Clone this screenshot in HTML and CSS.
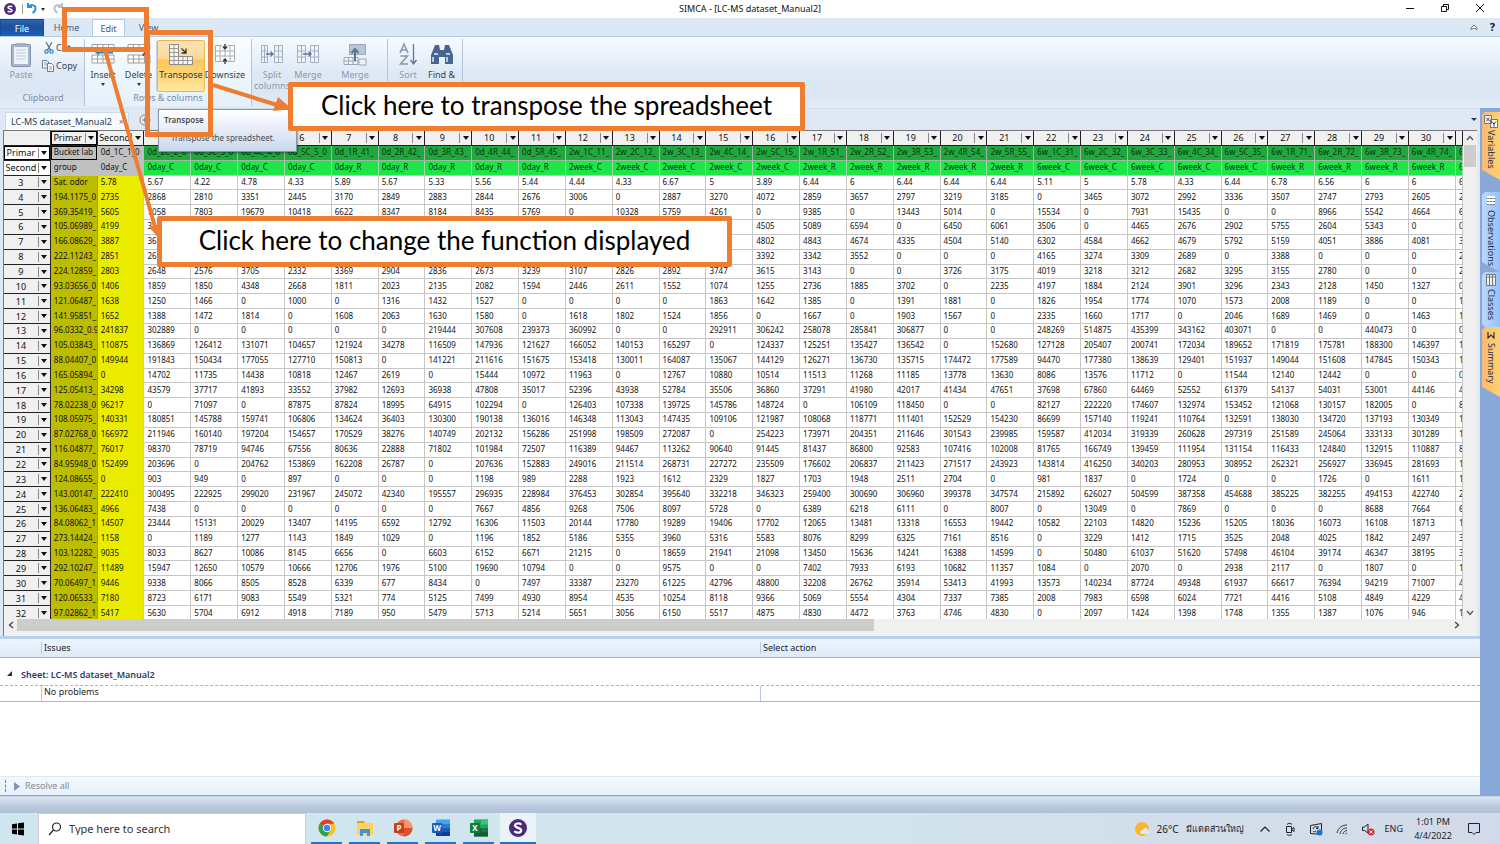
FILE: index.html
```html
<!DOCTYPE html>
<html lang="en">
<head>
<meta charset="utf-8">
<title>SIMCA - [LC-MS dataset_Manual2]</title>
<link rel="stylesheet" href="styles.css">
</head>
<body>
<div class="app">
  <header class="titlebar">
    <div class="quick">
      <svg width="12" height="12" viewBox="0 0 12 12"><circle cx="6" cy="6" r="6" fill="#4b2a7b"/><path d="M8.2 3.9C7.6 3 4 2.7 4 4.5S8.1 5.800 8.100 7.500 4.500 9.100 3.700 8" fill="none" stroke="#fff" stroke-width="1.500"/></svg>
      <span class="quick-sep"></span>
      <button class="plain" aria-label="Undo"><svg width="12" height="12" viewBox="0 0 12 12"><path d="M2 0v4h4M2.500 3.500C6 .500 10 2.500 9.500 6 9.200 8 8 9 6.500 10" fill="none" stroke="#2e8fd6" stroke-width="2"/></svg></button>
      <span class="caret"></span>
      <button class="plain redo" aria-label="Redo"><svg width="12" height="12" viewBox="0 0 12 12"><path d="M10 0v4H6M9.500 3.500C6 .500 2 2.500 2.500 6 2.800 8 4 9 5.500 10" fill="none" stroke="#b4c0d0" stroke-width="2"/></svg></button>
      <span class="caret dim"></span>
      <span class="bar"></span>
    </div>
    <h1 class="title">SIMCA - [LC-MS dataset_Manual2]</h1>
    <div class="window-buttons">
      <button class="plain" aria-label="Minimize"><svg width="10" height="10" viewBox="0 0 10 10"><path d="M1 4.500h8" stroke="#111"/></svg></button>
      <button class="plain" aria-label="Restore"><svg width="10" height="10" viewBox="0 0 10 10"><path d="M1.500 2.500h5v5h-5zM3.500 2V.500h5v5H7" fill="none" stroke="#111"/></svg></button>
      <button class="plain" aria-label="Close"><svg width="10" height="10" viewBox="0 0 10 10"><path d="M1 0l8 8M9 0L1 8" stroke="#111"/></svg></button>
    </div>
  </header>

  <nav class="tabs">
    <button class="tab file">File</button>
    <button class="tab home">Home</button>
    <button class="tab edit">Edit</button>
    <button class="tab view">View</button>
    <span class="tabs-end">
      <svg width="8" height="7" viewBox="0 0 8 7"><path d="M1 5.500V4l3-3 3 3v1.500L4 4z" fill="#fff" stroke="#555" stroke-width=".8"/></svg>
      <b class="help">?</b>
    </span>
  </nav>

  <section class="ribbon">
    <div class="group clip">
      <div class="tools">
        <button class="tool off w-paste"><svg width="22" height="26" viewBox="0 0 22 26"><rect x="1.500" y="3.500" width="19" height="22" rx="1" fill="#a9b6c9" stroke="#8394ac"/><rect x="4" y="6" width="14" height="17" fill="#eef3fa"/><path d="M6 9h10M6 12h10M6 15h10M6 18h10" stroke="#c2cddd"/><rect x="6" y="2" width="10" height="4" rx="1" fill="#a3b1c6"/></svg>Paste</button>
        <div class="stack">
          <button class="mini cut"><svg width="10" height="12" viewBox="0 0 10 12"><path d="M2 0l4.500 8M8 0L3.500 8" stroke="#5f7387" stroke-width="1.300"/><circle cx="2.500" cy="9.500" r="1.700" fill="none" stroke="#2e86cc" stroke-width="1.200"/><circle cx="7.500" cy="9.500" r="1.700" fill="none" stroke="#2e86cc" stroke-width="1.200"/></svg>Cut</button>
          <button class="mini"><svg width="12" height="12" viewBox="0 0 12 12"><path d="M.5.5h4.500l1.500 1.500v6h-6z" fill="#fff" stroke="#6d7c93"/><path d="M2 3h3M2 5h3" stroke="#6d9bc9"/><path d="M5.500 3.500h4l2 2v6h-6z" fill="#fff" stroke="#6d7c93"/><path d="M7 7h3M7 9h3" stroke="#6d9bc9"/></svg>Copy</button>
        </div>
      </div>
      <div class="caption">Clipboard</div>
    </div>
    <div class="group rows">
      <div class="tools">
        <button class="tool w-ins"><svg width="24" height="26" viewBox="0 0 24 26"><path d="M1 3.500h22v5H1zM1 14h22v8H1zM1 18h22M6.500 3v5M12 3v5M17.500 3v5M6.500 14v8M12 14v8M17.500 14v8" fill="#fff" stroke="#a0a0a0"/><path d="M3 10.500l5-3v2h14v3H8v2z" fill="#2f7fc2"/></svg>Insert<span class="caret"></span></button>
        <button class="tool w-del"><svg width="24" height="26" viewBox="0 0 24 26"><path d="M1 3.500h22v5H1zM1 14h22v8H1zM1 18h22M6.500 3v5M12 3v5M17.500 3v5M6.500 14v8M12 14v8M17.500 14v8" fill="#fff" stroke="#a0a0a0"/><path d="M16 15c1-3 3-5 7-6" fill="none" stroke="#d62b1f" stroke-width="2"/></svg>Delete<span class="caret"></span></button>
        <button class="tool w-tra hot"><svg width="26" height="26" viewBox="0 0 26 26"><path d="M1.500 3.500h9v12h14v8h-23z" fill="#f6f4f0" stroke="#8a8a8a"/><path d="M1.500 7.500h9M1.500 11.500h9M1.500 15.500h9M1.500 19.500h23M6 3.500v20M10.500 15v8M15 15.500v8M19.500 15.500v8" stroke="#999"/><path d="M13.500 7.500l4 4M18 7.500v4.500h-4.500" fill="none" stroke="#333" stroke-width="1.300"/></svg>Transpose</button>
        <button class="tool w-dow"><svg width="22" height="26" viewBox="0 0 22 26"><path d="M1.500 4.500h19v16h-19zM1 10h20M1 15h20M6 4v16M11 4v16M16 4v16" fill="#fff" stroke="#aaa"/><path d="M8 3h6v6H8zM8 16h6v6H8z" fill="#eef4fb"/><path d="M11 3v5M9 5.500L11 8l2-2.500M11 23v-5M9 20.500l2-2.500 2 2.500" fill="none" stroke="#333" stroke-width="1.300"/></svg>Downsize</button>
      </div>
      <div class="caption">Rows &amp; columns</div>
    </div>
    <div class="group merge">
      <div class="tools">
        <button class="tool off w-spl"><svg width="22" height="26" viewBox="0 0 22 26"><path d="M.5 4.500h6v17h-6zM.5 10h6M.5 16h6M3.500 4v17M13.500 4.500h8v17h-8zM13.500 10h8M13.500 16h8M17.500 4v17" fill="#eef3fa" stroke="#a3afc2"/><path d="M5 13h7M9.500 10.500L12 13l-2.500 2.500" fill="none" stroke="#5f7596" stroke-width="1.300"/></svg>Split<br>columns</button>
        <button class="tool off w-mer"><svg width="22" height="26" viewBox="0 0 22 26"><path d="M.5 4.500h8v17h-8zM.5 10h8M.5 16h8M4.500 4v17M13.500 4.500h8v17h-8zM13.500 10h8M13.500 16h8M17.500 4v17" fill="#eef3fa" stroke="#a3afc2"/><path d="M6 13h8M11.500 10.500L14 13l-2.500 2.500" fill="none" stroke="#5f7596" stroke-width="1.300"/></svg>Merge</button>
        <button class="tool off w-mrg"><svg width="24" height="26" viewBox="0 0 24 26"><path d="M6.500 3.500h16v10h-16z" fill="#b9c4d4" stroke="#9aa8bc"/><path d="M1 16.500h14v7H1zM1 20h14M5.500 16v8M10 16v8M16 18h7v6h-7z" fill="#eef3fa" stroke="#9aa8bc"/><path d="M12 20V9M8.500 12L12 8l3.500 4" fill="none" stroke="#5f7596" stroke-width="2"/></svg>Merge</button>
      </div>
    </div>
    <div class="group find">
      <div class="tools">
        <button class="tool off w-sor"><svg width="20" height="26" viewBox="0 0 20 26"><path d="M2 12l4-9 4 9M3.500 9h5M2.500 15h7l-7 8h7.500" fill="none" stroke="#8695ae" stroke-width="1.500"/><path d="M15.500 3v19M12.500 19l3 4 3-4" fill="none" stroke="#62779a" stroke-width="1.300"/></svg>Sort</button>
        <button class="tool w-fin"><svg width="24" height="26" viewBox="0 0 24 26"><path d="M5 4h4l1 5h4l1-5h4l4 10v9h-8v-7h-6v7H1v-9z" fill="#49658d"/><path d="M4 13h4M16 13h4M3 16v5M17 16v5" stroke="#b5cbe6" stroke-width="2"/></svg>Find &amp;</button>
      </div>
    </div>
  </section>

  <main class="workspace">
    <div class="content">
      <div class="docbar">
        <div class="doctab"><span>LC-MS dataset_Manual2</span><span class="x">×</span></div>
        <svg class="plus" width="12" height="12" viewBox="0 0 12 12"><circle cx="6" cy="6" r="5" fill="#f4f7fb" stroke="#777"/><path d="M3 6h6M6 3v6" stroke="#666"/></svg>
        <span class="caret doc-caret"></span>
      </div>
      <div class="sheet">
        <div class="sheet-row">
          <div class="cells"><table class="grid" id="grid"></table></div>
          <div class="vscroll">
            <svg width="8" height="6" viewBox="0 0 8 6"><path d="M1 5l3-3.500L7 5" fill="none" stroke="#555" stroke-width="1.300"/></svg>
            <span class="vthumb"></span>
            <svg width="8" height="6" viewBox="0 0 8 6"><path d="M1 1l3 3.500L7 1" fill="none" stroke="#555" stroke-width="1.300"/></svg>
          </div>
        </div>
        <div class="hscroll">
          <svg width="6" height="8" viewBox="0 0 6 8"><path d="M5 1L1.500 4 5 7" fill="none" stroke="#444" stroke-width="1.300"/></svg>
          <span class="htrack"><span class="hthumb"></span></span>
          <svg width="6" height="8" viewBox="0 0 6 8"><path d="M1 1l3.500 3L1 7" fill="none" stroke="#444" stroke-width="1.300"/></svg>
        </div>
      </div>
      <section class="issues">
        <div class="issue-head"><span class="c1"></span><span class="c2">Issues</span><span class="c3">Select action</span></div>
        <div class="issue-sheet"><svg width="6" height="6" viewBox="0 0 6 6"><path d="M5 0v5H0z" fill="#333"/></svg><b>Sheet: LC-MS dataset_Manual2</b></div>
        <div class="issue-row"><span class="c1"></span><span class="c2">No problems</span><span class="c3"></span></div>
        <div class="issue-space"></div>
        <div class="resolve"><span class="grip"></span><button class="plain resolve-btn"><svg width="6" height="9" viewBox="0 0 6 9"><path d="M0 0l6 4.500L0 9z" fill="#7f93b5"/></svg>Resolve all</button></div>
      </section>
    </div>
    <aside class="side">
      <button class="side-tab orange t-var"><svg width="14" height="14" viewBox="0 0 14 14"><path d="M.5.500h7v8h-7zM6.500 4.500h7v8h-7z" fill="#fff" stroke="#777"/><path d="M2 2.500l4 4M6 2.500l-4 4M8 6.500l2 2.500 2-2.500M10 9v2.500" stroke="#333" fill="none"/></svg>Variables</button>
      <button class="side-tab blue t-obs"><svg width="10" height="10" viewBox="0 0 10 10"><path d="M1 1h8M1 4h8M1 7h8" stroke="#fff" stroke-width="2"/><path d="M1 2.500h8M1 5.500h8M1 8.500h8" stroke="#777" stroke-dasharray="2 1"/></svg>Observations</button>
      <button class="side-tab blue t-cls"><svg width="10" height="12" viewBox="0 0 10 12"><path d="M.5.500h9v11h-9zM3.500 0v12M6.500 0v12M0 3h10" fill="#eee" stroke="#777"/></svg>Classes</button>
      <button class="side-tab orange t-sum"><svg width="8" height="8" viewBox="0 0 8 8"><path d="M1 1v6l3-3 3 3V1" fill="none" stroke="#333" stroke-width="1.200"/></svg>Summary</button>
    </aside>
  </main>
  <div class="status"></div>

  <footer class="taskbar">
    <button class="plain start" aria-label="Start"><svg width="14" height="14" viewBox="0 0 14 14"><path d="M1 2.300l5-.8v5H1zM7 1.300L13 .5v6H7zM1 7.500h5v5l-5-.8zM7 7.500h6v6l-6-.8z" fill="#000"/></svg></button>
    <label class="search"><svg width="14" height="14" viewBox="0 0 14 14"><circle cx="8.500" cy="5" r="4" fill="none" stroke="#222" stroke-width="1.200"/><path d="M5.500 8L1 13" stroke="#222" stroke-width="1.200"/></svg><input type="text" placeholder="Type here to search" aria-label="Search"></label>
    <div class="apps">
      <button class="app-btn" aria-label="Chrome"><svg width="18" height="18" viewBox="0 0 18 18"><circle cx="9" cy="9" r="8.500" fill="#fbc116"/><path d="M9 9L1.640 4.750A8.500 8.500 0 0 1 16.360 4.750H9z" fill="#e33b2e"/><path d="M9 9L1.640 4.750A8.500 8.500 0 0 0 8.700 17.500l4-6.500z" fill="#2aa14a"/><circle cx="9" cy="9" r="4.200" fill="#fff"/><circle cx="9" cy="9" r="3.300" fill="#4285f4"/></svg></button>
      <button class="app-btn" aria-label="File Explorer"><svg width="18" height="18" viewBox="0 0 18 18"><path d="M1 2h7l1 2h7v4H1z" fill="#e0a112"/><path d="M1 4h16v12H1z" fill="#fdd263"/><path d="M4 10h10v7h-3v-3H7v3H4z" fill="#3d97d8"/></svg></button>
      <button class="app-btn" aria-label="PowerPoint"><svg width="20" height="18" viewBox="0 0 20 18"><circle cx="11" cy="9" r="8.500" fill="#ed6c47"/><path d="M11 9h8.500a8.500 8.500 0 0 1-8.500 8.500z" fill="#d35230"/><path d="M11 .5A8.500 8.500 0 0 1 19.500 9H11z" fill="#ff8f6b"/><rect x="1" y="4" width="10" height="10" rx="1" fill="#c43e1c"/><text x="6" y="12" class="glyph">P</text></svg></button>
      <button class="app-btn" aria-label="Word"><svg width="20" height="18" viewBox="0 0 20 18"><path d="M5 .500h14v5H5z" fill="#41a5ee"/><path d="M5 5h14v4H5z" fill="#2b7cd3"/><path d="M5 9h14v4H5z" fill="#185abd"/><path d="M5 13h14v4H5z" fill="#103f91"/><rect x="1" y="4" width="10" height="10" rx="1" fill="#185abd"/><text x="6" y="12" class="glyph">W</text></svg></button>
      <button class="app-btn" aria-label="Excel"><svg width="20" height="18" viewBox="0 0 20 18"><path d="M5 .500h14v17H5z" fill="#21a366"/><path d="M12 .500h7v5h-7z" fill="#33c481"/><path d="M5 9h14v8.500H5z" fill="#185c37"/><path d="M12 9h7v4h-7z" fill="#107c41"/><rect x="1" y="4" width="10" height="10" rx="1" fill="#107c41"/><text x="6" y="12" class="glyph">X</text></svg></button>
      <button class="app-btn on" aria-label="SIMCA"><svg width="18" height="20" viewBox="0 0 18 20"><circle cx="9" cy="10" r="9" fill="#4b2a7b"/><path d="M12.300 6.800C11.200 4.800 6 5 6 7.600S12.200 9.600 12.200 12.400 6.600 15.200 5.500 13" fill="none" stroke="#fff" stroke-width="2.200"/></svg></button>
    </div>
    <div class="tray">
      <svg width="16" height="16" viewBox="0 0 16 16"><circle cx="8" cy="8" r="7" fill="#fbb62c"/><path d="M7 13c-2-3 1-4 2-4 1-3 5-2 5 0 3 1 1 4-1 4z" fill="#d8edfb"/></svg>
      <span class="temp">26°C</span><span class="thai">มีแดดส่วนใหญ่</span>
      <svg class="t-up" width="12" height="12" viewBox="0 0 12 12"><path d="M1.500 8.500L6 4l4.500 4.500" fill="none" stroke="#222" stroke-width="1.200"/></svg>
      <svg class="t-ic" width="12" height="14" viewBox="0 0 12 14"><path d="M2.500 4.500h5v6h-5zM8 7l2-1.500v4L8 8M3 2.500c1-1.500 4-1.500 5 0M3 12.500c1 1 4 1 5 0" fill="none" stroke="#222"/></svg>
      <svg class="t-ic" width="14" height="14" viewBox="0 0 14 14"><path d="M1.500 3.500l11-2v11l-11-1z" fill="none" stroke="#222"/><path d="M4 7c1-3 4-3 5-1M9 4v2.500H7M4 9c1 1 2 1 3 0" fill="none" stroke="#222"/><circle cx="10.500" cy="10.500" r="3" fill="#2472c8"/></svg>
      <svg class="t-ic" width="12" height="14" viewBox="0 0 12 14"><path d="M1 11C2 6 6 3 11 3M4 12c1-4 3-6 7-6M7 12c.5-2 2-3.500 4-3.500M9.500 12l1.500-1" fill="none" stroke="#333"/></svg>
      <svg class="t-ic" width="14" height="14" viewBox="0 0 14 14"><path d="M1.500 5h2L7 2v9L3.500 8.500h-2z" fill="none" stroke="#222"/><circle cx="10" cy="10" r="3.500" fill="#d92b2b"/><path d="M8.500 8.500l3 3M11.500 8.500l-3 3" stroke="#fff"/></svg>
      <span class="eng">ENG</span>
      <span class="clock">1:01 PM<br>4/4/2022</span>
      <svg class="note" width="14" height="14" viewBox="0 0 14 14"><path d="M1.500 1.500h11v9H9L7 12.500 5 10.500H1.500z" fill="none" stroke="#222"/></svg>
    </div>
  </footer>

  <div class="tooltip" role="tooltip"><b>Transpose</b><p>Transpose the spreadsheet.</p></div>
  <svg class="arrows" width="320" height="270" viewBox="0 0 320 270">
    <path d="M105 50L155 227M213 85L277 105" fill="none" stroke="#ed7d31" stroke-width="4"/>
    <path d="M149 227l11-3 2 18zM273 111l5-14 14 12z" fill="#ed7d31"/>
  </svg>
  <div class="frame frame-edit"></div>
  <div class="frame frame-transpose"></div>
  <div class="callout call-transpose">Click here to transpose the spreadsheet</div>
  <div class="callout call-function">Click here to change the function displayed</div>
</div>
<script src="sheet.js"></script>
</body>
</html>
```
FILE: styles.css
```css
* { box-sizing: border-box; }
body {
  margin: 0;
  font-family: "Noto Sans", "Open Sans", sans-serif;
  font-size: 9px;
  line-height: 12px;
  color: #1e1e1e;
  background: #fff;
}
button, input { font: inherit; color: inherit; }
button { border: 0; padding: 0; background: none; }
svg { display: block; flex: none; }
.plain { display: flex; align-items: center; }
.app { position: relative; display: flex; flex-direction: column; min-height: 100vh; overflow: hidden; }
.caret { width: 0; height: 0; border: 2px solid transparent; border-top: 3px solid #333; border-bottom: 0; flex: none; }
.caret.dim { border-top-color: #999; }

.titlebar { height: 18px; display: grid; grid-template-columns: 1fr auto 1fr; align-items: center; background: #fff; }
.quick { display: flex; align-items: center; padding-left: 4px; height: 14px; }
.quick-sep { width: 1px; height: 10px; background: #999; margin: 0 3px 0 6px; }
.quick .caret { margin-left: 3px; }
.redo { margin-left: 7px; }
.bar { width: 6px; height: 1px; background: #555; margin-left: 7px; }
.title { margin: 0; font-size: 9px; font-weight: 400; color: #111; }
.window-buttons { display: flex; justify-content: flex-end; gap: 25px; padding-right: 15px; }

.tabs { height: 19px; display: flex; align-items: stretch; background: #dde8f5; border-bottom: 1px solid #b4cbe4; color: #4a5a72; }
.tab { text-align: center; padding-top: 1px; }
.file { width: 44px; margin-top: 1px; background: linear-gradient(#2c62ad, #1d4f9c 50%, #1a62bd); color: #fff; border: 1px solid #1a4a90; border-bottom: 0; }
.home { width: 45px; }
.edit { width: 33px; margin: 1px 0 0 3px; background: #fbfdff; border: 1px solid #b4cbe4; border-bottom: 0; }
.view { width: 47px; }
.tabs-end { margin-left: auto; display: flex; align-items: center; gap: 12px; padding-right: 5px; }
.help { font-size: 11px; color: #111; }

.ribbon { height: 71px; display: flex; background: linear-gradient(#f8fbff, #dee9f6 50%, #dbe6f4 75%, #e2ecf8); color: #33425b; }
.group { display: flex; flex-direction: column; justify-content: space-between; padding: 2px 0; height: 67px; margin-top: 2px; border-right: 1px solid #b4c5db; }
.clip { width: 85px; }
.clip .caption { padding-left: 2px; }
.rows { width: 167px; background: linear-gradient(#fafdff, #e4f0fb); }
.merge { width: 136px; }
.find { width: 75px; }
.tools { display: flex; height: 50px; }
.caption { text-align: center; color: #7c8ba3; }
.tool { display: flex; flex-direction: column; align-items: center; line-height: 11px; flex: none; text-align: center; white-space: nowrap; }
.tool svg { margin-bottom: 2px; }
.tool .caret { margin-top: 3px; }
.off { color: #8d98aa; }
.w-paste { width: 42px; }
.stack { display: flex; flex-direction: column; gap: 6px; padding-top: 1px; }
.mini { display: flex; align-items: center; gap: 2px; }
.cut { padding-left: 2px; }
.w-ins { width: 36px; }
.w-del { width: 36px; border-right: 1px solid #c3d0e2; margin-right: 1px; }
.w-tra { width: 46px; }
.hot { background: linear-gradient(#fce3b8, #fdd79a 36%, #fdc457 38%, #ffe9a0); outline: 1px solid #e8b94a; border-radius: 1px; color: #333; }
.w-dow { width: 42px; }
.w-spl { width: 40px; }
.w-mer { width: 32px; }
.w-mrg { width: 62px; }
.w-sor { width: 40px; }
.w-fin { width: 27px; }

.workspace { flex: 1; display: flex; min-height: 0; background: #dde8f5; }
.content { flex: 1; min-width: 0; display: flex; flex-direction: column; }
.docbar { height: 22px; display: flex; align-items: center; background: #dfe9f5; border-top: 1px solid #d4e0ee; }
.doctab { display: flex; align-items: center; justify-content: space-between; height: 18px; margin: 3px 0 0 5px; padding: 0 4px 0 5px; background: #f7faff; border: 1px solid #cbd9ea; border-bottom: 0; width: 124px; white-space: nowrap; color: #2c3a52; }
.x { color: #777; }
.plus { margin-left: 10px; }
.doc-caret { margin: 0 3px 0 auto; border-width: 3px 3px 0; border-top-color: #1f3a66; }

.sheet { flex: 1; display: flex; flex-direction: column; min-height: 0; margin: 0 3px 0 3px; border-left: 1px solid #777; border-top: 1px solid #777; background: #f0f0f0; }
.sheet-row { flex: 1; display: flex; min-height: 0; }
.cells { flex: 1; min-width: 0; height: 488px; overflow: hidden; background: #fff; }
.grid { width: 100%; height: 490px; table-layout: fixed; border-collapse: separate; border-spacing: 0; font-size: 8px; line-height: 12px; color: #111; }
.grid td, .grid th { padding: 0 0 1px 3px; border-right: 1px solid #c6c6c6; border-bottom: 1px solid #c6c6c6; overflow: hidden; white-space: nowrap; text-align: left; font-weight: 400; }
.grid .last { width: 7px; }
.grid th { background: #f0f0f0; border-color: #222; padding: 0; font-size: 9px; }
.head { display: flex; align-items: center; }
.head span { flex: 1; min-width: 0; text-align: center; line-height: 13px; }
.head button { width: 12px; height: 10px; flex: none; border-left: 1px solid #888; display: flex; align-items: center; justify-content: center; }
.head button::after { content: ""; border: 3px solid transparent; border-top: 4px solid #111; border-bottom: 0; }
.grid .white { background: #fff; }
.grid .ring { box-shadow: inset 0 0 0 1px #000; }
.grid .key { background: #bcbc00; border-color: #a5a500; border-bottom-color: #bcbc00; }
.grid .second { background: #ebeb00; border-color: #e0e000; border-bottom-color: #ebeb00; }
.grid .gray { background: #c0c0c0; border-color: #c0c0c0; }
.grid .dark { background: #20a83f; border-color: #9fb7a4; color: #06320f; }
.grid .lite { background: #1fe648; border-color: #9fd8aa; color: #06320f; }

.vscroll { width: 14px; display: flex; flex-direction: column; align-items: center; padding: 4px 0 3px; background: #f0f0f0; }
.vthumb { width: 12px; height: 22px; background: #cdcdcd; margin: 4px 0 auto; }
.hscroll { height: 12px; display: flex; align-items: center; padding: 0 17px 0 4px; margin-bottom: 5px; background: #f0f0f0; }
.htrack { flex: 1; margin: 0 8px 0 3px; height: 12px; }
.hthumb { display: block; width: 60%; height: 100%; background: #cdcdcd; }

.issues { background: #fff; border-top: 3px solid #b9cfea; }
.c1 { width: 41px; flex: none; }
.c2 { width: 719px; flex: none; border-left: 1px solid #b9c9dd; padding-left: 2px; }
.c3 { flex: 1; border-left: 1px solid #b9c9dd; padding-left: 2px; }
.issue-head { height: 19px; display: flex; align-items: center; background: linear-gradient(#ecf3fc, #dfeaf8); border-bottom: 1px solid #9fb4cf; }
.issue-sheet { height: 28px; display: flex; align-items: flex-end; gap: 8px; padding: 0 0 4px 7px; color: #1f3c66; border-bottom: 1px dashed #9db3d2; }
.issue-sheet svg { margin-bottom: 4px; }
.issue-sheet b { font-weight: 600; font-size: 9px; }
.issue-row { height: 16px; display: flex; border-bottom: 1px solid #b5b5b5; }
.issue-space { height: 74px; }
.resolve { height: 20px; display: flex; align-items: center; background: linear-gradient(#f3f8fd, #e6f1f9); border-bottom: 1px solid #8fa5c2; padding-left: 5px; border-top: 1px solid #dde8f5; }
.grip { height: 12px; border-left: 1px dashed #5b84c4; margin-right: 8px; }
.resolve-btn { gap: 5px; color: #8a8a8a; }

.side { width: 20px; background: #88a8d8; padding: 4px 0 0 2px; display: flex; flex-direction: column; }
.side-tab { writing-mode: vertical-rl; display: flex; align-items: center; width: 18px; gap: 4px; padding-top: 4px; color: #1e2d4a; clip-path: polygon(0 3px, 3px 0, 100% 0, 100% 100%, 0 calc(100% - 10px)); }
.orange { background: linear-gradient(90deg, #fbb877, #ffd36b); }
.blue { background: linear-gradient(90deg, #bcd9fb, #94c0fa); }
.t-var { height: 68px; margin-bottom: 12px; padding-top: 3px; gap: 1px; }
.t-obs { height: 80px; }
.t-cls { height: 55px; padding-top: 2px; gap: 3px; clip-path: polygon(0 3px, 3px 0, 100% 0, 100% 100%, 3px 100%, 0 calc(100% - 3px)); }
.t-sum { height: 70px; }

.status { height: 17px; background: linear-gradient(#dbe6f3, #b9c9dc 60%, #b0c0d6); border-top: 1px solid #c5d4e6; }
.taskbar { height: 31px; display: flex; align-items: stretch; background: linear-gradient(90deg, #cfe6ee, #d2e4ec 55%, #d2daea); }
.start { width: 38px; padding-left: 11px; }
.search { width: 268px; display: flex; align-items: center; gap: 5px; padding-left: 9px; background: #fff; border: 1px solid #ccc; border-bottom: 0; }
.search input { border: 0; outline: 0; flex: 1; min-width: 0; padding: 0 2px; font-size: 11px; background: none; }
.search input::placeholder { color: #333; opacity: 1; }
.apps { display: flex; margin-left: 5px; gap: 7px; }
.app-btn { width: 31px; display: flex; align-items: center; justify-content: center; border-bottom: 2px solid #1976d2; }
.app-btn.on { width: 36px; margin-left: -1px; background: #eaf3f8; }
.glyph { font: 700 8px "Open Sans", sans-serif; fill: #fff; text-anchor: middle; }
.tray { margin-left: auto; display: flex; align-items: center; padding-right: 19px; font-size: 9px; color: #222; }
.temp { margin-left: 7px; font-size: 10px; }
.thai { margin: 0 15px 0 7px; white-space: nowrap; }
.t-ic { margin-left: 13px; }
.eng { margin-left: 10px; }
.clock { width: 50px; text-align: center; margin-left: 5px; line-height: 14px; }
.note { margin-left: 9px; }

.tooltip { position: absolute; left: 158px; top: 109px; width: 139px; height: 43px; padding: 4px 5px; background: linear-gradient(#fff, #c9d8ee); border: 1px solid #8a96a8; box-shadow: 1px 1px 2px rgba(0, 0, 0, .4); color: #4b4b4b; }
.tooltip b { font-weight: 600; font-size: 8px; }
.tooltip p { margin: 6px 0 0 7px; font-size: 8px; white-space: nowrap; }
.arrows { position: absolute; left: 0; top: 0; pointer-events: none; }
.frame, .callout { position: absolute; border: 5px solid #ed7d31; }
.frame { pointer-events: none; }
.frame-edit { left: 62px; top: 7px; width: 87px; height: 45px; }
.frame-transpose { left: 145px; top: 30px; width: 68px; height: 107px; }
.callout { display: flex; align-items: center; justify-content: center; background: #fff; border-radius: 2px; color: #000; font-family: Lato, sans-serif; font-size: 26px; line-height: 30px; white-space: nowrap; }
.call-transpose { left: 288px; top: 82px; width: 517px; height: 49px; padding-bottom: 3px; }
.call-function { left: 157px; top: 216px; width: 575px; height: 51px; padding-bottom: 3px; }
```
FILE: sheet.js
```js
const names = ["0d_2C_2_0", "0d_3C_3_0", "0d_4C_4_0", "0d_5C_5_0"];
const groups = Array(4).fill("0day_C");
function series(prefix, type, start, count, group) {
  for (let i = 1; i <= count; i++) {
    names.push(`${prefix}_${i}${type}_${start + i - 1}_`);
    groups.push(group);
  }
}
series("0d", "R", 41, 5, "0day_R");
series("2w", "C", 11, 5, "2week_C");
series("2w", "R", 51, 5, "2week_R");
series("6w", "C", 31, 5, "6week_C");
series("6w", "R", 71, 4, "6week_R");
// Column 31 has room for one character only.
names.push("6");
groups.push("6");

// One line per spreadsheet row: label, second column, then columns 3 to 31. "-" is an empty cell.
const data = `Sat.~odor 5.78 5.67 4.22 4.78 4.33 5.89 5.67 5.33 5.56 5.44 4.44 4.33 6.67 5 3.89 6.44 6 6.44 6.44 6.44 5.11 5 5.78 4.33 6.44 6.78 6.56 6 6 6
194.1175_0 2735 2868 2810 3351 2445 3170 2849 2883 2844 2676 3006 0 2887 3270 4072 2859 3657 2797 3219 3185 0 3465 3072 2992 3336 3507 2747 2793 2605 2
369.35419_ 5605 7058 7803 19679 10418 6622 8347 8184 8435 5769 0 10328 5759 4261 0 9385 0 13443 5014 0 15534 0 7931 15435 0 0 8966 5542 4664 6
105.06989_ 4199 3 - - - - - - - - - - - - 4505 5089 6594 0 6450 6061 3506 0 4465 2676 2902 5755 2604 5343 0 0
166.08629_ 3887 36 - - - - - - - - - - - - 4802 4843 4674 4335 4504 5140 6302 4584 4662 4679 5792 5159 4051 3886 4081 3
222.11243_ 2851 26 - - - - - - - - - - - - 3392 3342 3552 0 0 0 4165 3274 3309 2689 0 3388 0 0 0 2
224.12859_ 2803 2648 2576 3705 2332 3369 2904 2836 2673 3239 3107 2826 2892 3747 3615 3143 0 0 3726 3175 4019 3218 3212 2682 3295 3155 2780 0 0 2
93.03656_0 1406 1859 1850 4348 2668 1811 2023 2135 2082 1594 2446 2611 1552 1074 1255 2736 1885 3702 0 2235 4197 1884 2124 3901 3296 2343 2128 1450 1327 0
121.06487_ 1638 1250 1466 0 1000 0 1316 1432 1527 0 0 0 0 1863 1642 1385 0 1391 1881 0 1826 1954 1774 1070 1573 2008 1189 0 0 1
141.95851_ 1652 1388 1472 1814 0 1608 2063 1630 1580 0 1618 1802 1524 1856 0 1667 0 1903 1567 0 2335 1660 1717 0 2046 1689 1469 0 1463 1
96.0332_0.9 241837 302889 0 0 0 0 0 219444 307608 239373 360992 0 0 292911 306242 258078 285841 306877 0 0 248269 514875 435399 343162 403071 0 0 440473 0 0
105.03843_ 110875 136869 126412 131071 104657 121924 34278 116509 147936 121627 166052 140153 165297 0 124337 125251 135427 136542 0 152680 127128 205407 200741 172034 189652 171819 175781 188300 146397 1
88.04407_0 149944 191843 150434 177055 127710 150813 0 141221 211616 151675 153418 130011 164087 135067 144129 126271 136730 135715 174472 177589 94470 177380 138639 129401 151937 149044 151608 147845 150343 1
165.05894_ 0 14702 11735 14438 10818 12467 2619 0 15444 10972 11963 0 12767 10880 10514 11513 11268 11185 13778 13630 8086 13576 11712 0 11544 12140 12442 0 0 0
125.05413_ 34298 43579 37717 41893 33552 37982 12693 36938 47808 35017 52396 43938 52784 35506 36860 37291 41980 42017 41434 47651 37698 67860 64469 52552 61379 54137 54031 53001 44146 4
78.02238_0 96217 0 71097 0 87875 87824 18995 64915 102294 0 126403 107338 139725 145786 148724 0 106109 118450 0 0 82127 222220 174607 132974 153452 121068 130157 182005 0 8
108.05975_ 140331 180851 145788 159741 106806 134624 36403 130300 190138 136016 146348 113043 147435 109106 121987 108068 118771 111401 152529 154230 86699 157140 119241 110764 132591 138030 134720 137193 130349 1
87.02768_0 166972 211946 160140 197204 154657 170529 38276 140749 202132 156286 251998 198509 272087 0 254223 173971 204351 211646 301543 239985 159587 412034 319339 260628 297319 251589 245064 333133 301289 1
116.04877_ 76017 98370 78719 94746 67556 80636 22888 71802 101984 72507 116389 94467 113262 90640 91445 81437 86800 92583 107416 102008 81765 166749 139459 111954 131154 116433 124840 132915 110887 8
84.95948_0 152499 203696 0 204762 153869 162208 26787 0 207636 152883 249016 211514 268731 227272 235509 176602 206837 211423 271517 243923 143814 416250 340203 280953 308952 262321 256927 336945 281693 1
124.08655_ 0 903 949 0 897 0 0 0 1198 989 2288 1923 1612 2329 1827 1703 1948 2511 2704 0 981 1837 0 1724 0 0 1726 0 1611 1
143.00147_ 222410 300495 222925 299020 231967 245072 42340 195557 296935 228984 376453 302854 395640 332218 346323 259400 300690 306960 399378 347574 215892 626027 504599 387358 454688 385225 382255 494153 422740 2
136.06483_ 4966 7438 0 0 0 0 0 0 7667 4856 9268 7506 8097 5728 0 6389 6218 6111 0 8007 0 13049 0 7869 0 0 0 8688 7664 6
84.08062_1 14507 23444 15131 20029 13407 14195 6592 12792 16306 11503 20144 17780 19289 19406 17702 12065 13481 13318 16553 19442 10582 22103 14820 15236 15205 18036 16073 16108 18713 1
273.14424_ 1158 0 1189 1277 1143 1849 1029 0 1196 1852 5186 5355 3960 5316 5583 8076 8299 6325 7161 8516 0 3229 1412 1715 3525 2048 4025 1842 2497 3
103.12282_ 9035 8033 8627 10086 8145 6656 0 6603 6152 6671 21215 0 18659 21941 21098 13450 15636 14241 16388 14599 0 50480 61037 51620 57498 46104 39174 46347 38195 3
292.10247_ 11489 15947 12650 10579 10666 12706 1976 5100 19690 10794 0 0 9575 0 0 7402 7933 6193 10682 11357 1084 0 2070 0 2938 2117 0 1807 0 1
70.06497_1 9446 9338 8066 8505 8528 6339 677 8434 0 7497 33387 23270 61225 42796 48800 32208 26762 35914 53413 41993 13573 140234 87724 49348 61937 66617 76394 94219 71007 4
120.06533_ 7180 8723 6171 9083 5549 5321 774 5125 7499 4930 8954 4535 10254 8118 9366 5069 5554 4304 7337 7385 2008 7983 6598 6024 7721 4416 5108 4849 4229 4
97.02862_1 5417 5630 5704 6912 4918 7189 950 5479 5713 5214 5651 3056 6150 5517 4875 4830 4472 3763 4746 4830 0 2097 1424 1398 1748 1355 1387 1076 946 1`;

const head = (text, cls = "") =>
  `<th class="${cls}"><div class="head"><span>${text}</span><button aria-label="Menu for ${text}"></button></div></th>`;
const cell = (text, cls = "") => `<td class="${cls}">${text}</td>`;

let html = `<tr><th></th>${head("Primar", "ring")}${head("Second")}`;
for (let n = 3; n <= 30; n++) html += head(n);
html += `<th class="last"></th></tr>`;
html += `<tr>${head("Primar", "white ring")}${cell("Bucket lab", "gray ring")}${cell("0d_1C_1_0", "gray")}${names.map(n => cell(n, "dark")).join("")}</tr>`;
html += `<tr>${head("Second", "white")}${cell("group", "gray")}${cell("0day_C", "gray")}${groups.map(g => cell(g, "lite")).join("")}</tr>`;
data.split("\n").forEach((line, i) => {
  const parts = line.split(" ").map(p => (p === "-" ? "" : p.replace("~", " ")));
  html += `<tr>${head(i + 3)}` + parts.map((p, c) => cell(p, c === 0 ? "key" : c === 1 ? "second" : "")).join("") + "</tr>";
});
document.getElementById("grid").innerHTML = html;
```
